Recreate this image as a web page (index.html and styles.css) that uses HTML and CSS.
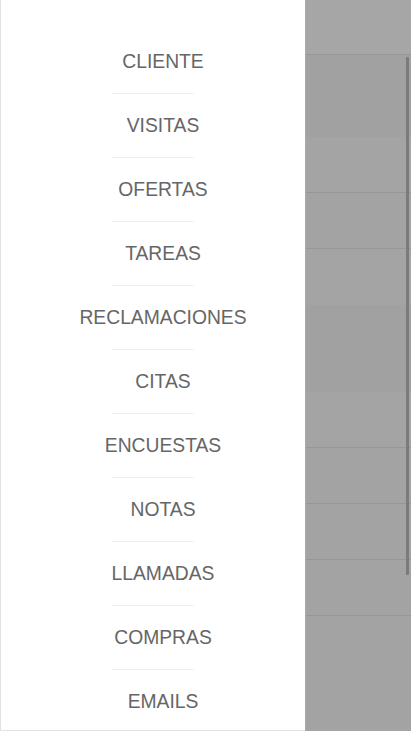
FILE: index.html
```html
<!DOCTYPE html>
<html lang="es">
<head>
<meta charset="utf-8">
<title>Menú</title>
<link rel="stylesheet" href="styles.css">
</head>
<body>
<div class="screen">
  <nav class="drawer">
    <ul class="menu">
      <li class="item">CLIENTE</li>
      <li class="sep"></li>
      <li class="item">VISITAS</li>
      <li class="sep"></li>
      <li class="item">OFERTAS</li>
      <li class="sep"></li>
      <li class="item">TAREAS</li>
      <li class="sep"></li>
      <li class="item">RECLAMACIONES</li>
      <li class="sep"></li>
      <li class="item">CITAS</li>
      <li class="sep"></li>
      <li class="item">ENCUESTAS</li>
      <li class="sep"></li>
      <li class="item">NOTAS</li>
      <li class="sep"></li>
      <li class="item">LLAMADAS</li>
      <li class="sep"></li>
      <li class="item">COMPRAS</li>
      <li class="sep"></li>
      <li class="item">EMAILS</li>
    </ul>
  </nav>
  <div class="backdrop">
    <div class="row r-top"></div>
    <div class="row r-2"><div class="band"></div></div>
    <div class="row r-3"></div>
    <div class="row r-4"><div class="band b1"></div><div class="band b2"></div></div>
    <div class="row r-5"></div>
    <div class="row r-6"></div>
    <div class="row r-7"></div>
    <div class="row r-8"><div class="band"></div></div>
    <div class="scrollbar"></div>
  </div>
</div>
</body>
</html>
```
FILE: styles.css
```css
* { box-sizing: border-box; }
html, body { margin: 0; padding: 0; }
body {
  width: 411px;
  height: 731px;
  overflow: hidden;
  background: #ffffff;
  font-family: "Liberation Sans", Arial, Helvetica, sans-serif;
}
.screen {
  display: flex;
  width: 411px;
  height: 731px;
}
.drawer {
  width: 305px;
  height: 731px;
  flex: 0 0 305px;
  background: #ffffff;
  border-left: 1px solid #e2e2e2;
  border-bottom: 1px solid #e2e2e2;
  overflow: hidden;
}
.menu {
  list-style: none;
  margin: 0;
  padding: 30px 0 0 0;
  display: flex;
  flex-direction: column;
  align-items: center;
}
.item {
  width: 100%;
  height: 63px;
  line-height: 64px;
  padding-left: 20px;
  text-align: center;
  font-size: 19.3px;
  color: #666666;
  letter-spacing: 0;
}
.sep {
  width: 82px;
  height: 1px;
  background: #f0f0f0;
}
.backdrop {
  position: relative;
  flex: 1;
  height: 731px;
  background: #a3a3a3;
  display: flex;
  flex-direction: column;
  border-left: 1px solid #a9a9a9;
}
.row {
  border-bottom: 1px solid #979797;
  display: flex;
  flex-direction: column;
  justify-content: flex-end;
}
.r-top { height: 55px; background: #a6a6a6; }
.r-2 { height: 138px; background: #a1a1a1; }
.r-2 .band { height: 55px; background: #a4a4a4; }
.r-3 { height: 56px; }
.r-4 { height: 199px; background: #a4a4a4; justify-content: flex-start; }
.r-4 .b1 { height: 56px; }
.r-4 .b2 { height: 87px; background: #a1a1a1; }
.r-5, .r-6, .r-7 { height: 56px; }
.r-8 { flex: 1; border-bottom: none; justify-content: flex-start; }
.r-8 .band { height: 56px; }
.scrollbar {
  position: absolute;
  left: 100px;
  top: 57px;
  width: 3px;
  height: 518px;
  background: #7b7b7b;
  border-radius: 1px;
}
```
